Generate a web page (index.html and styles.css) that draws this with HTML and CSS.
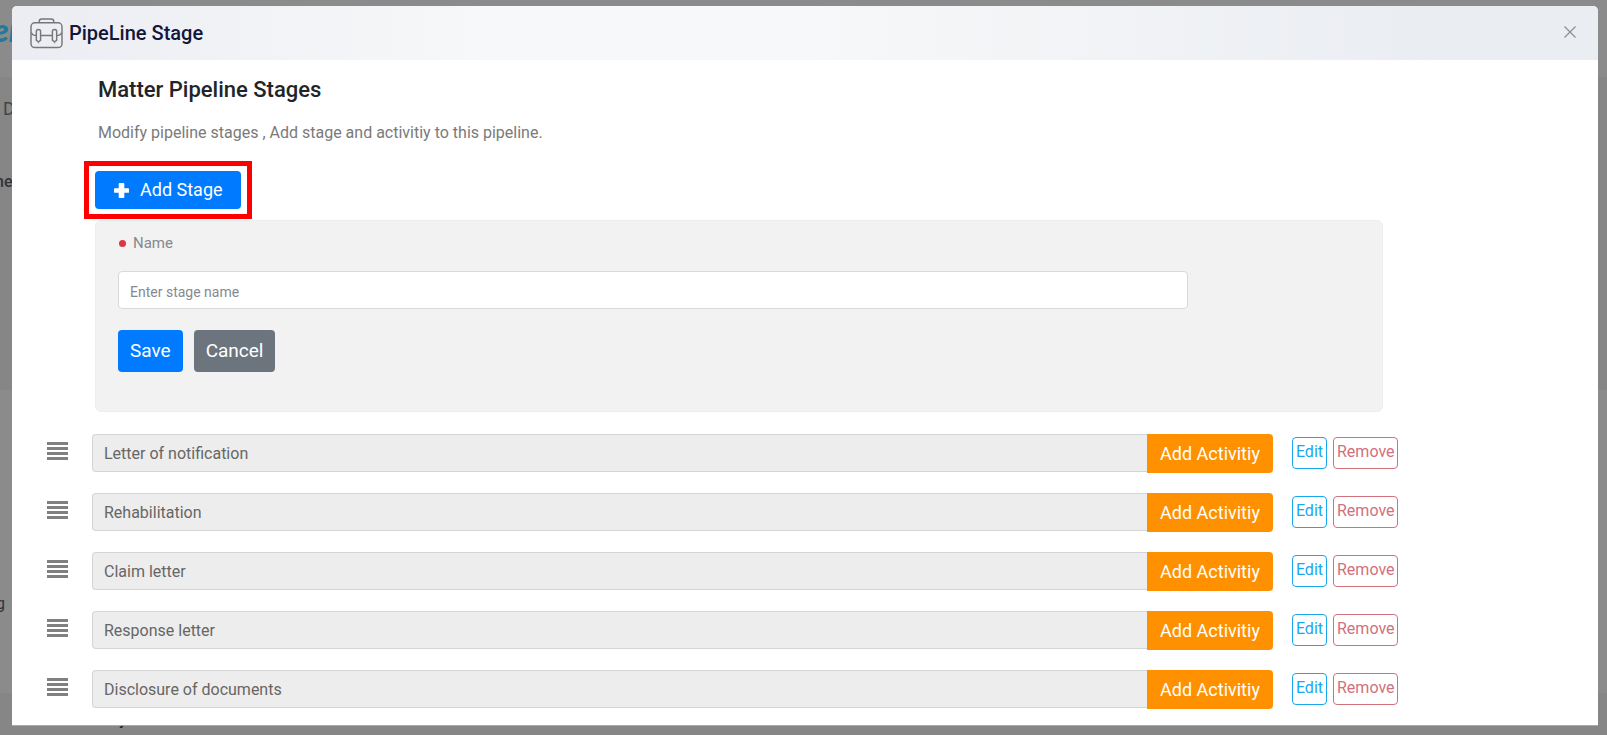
FILE: index.html
```html
<!DOCTYPE html>
<html lang="en">
<head>
<meta charset="utf-8">
<title>PipeLine Stage</title>
<link rel="stylesheet" href="styles.css">
</head>
<body>
<div class="page" aria-hidden="true">
  <div class="page-top"><span class="page-logo">er</span></div>
  <div class="page-band"><span>D</span><b>ne</b></div>
  <div class="page-section"><span>g</span></div>
  <div class="page-foot"><b>y</b></div>
</div>
<div class="backdrop">
<main class="modal" role="dialog" aria-labelledby="modal-title">
  <header class="modal-header">
    <svg class="case-icon" viewBox="0 0 34 32" fill="none" stroke="#777" stroke-width="1.5">
      <rect x="1" y="5" width="32" height="25.500" rx="4"/>
      <path d="M9.500 5V3.500Q9.500 1 12 1H22Q24.500 1 24.500 3.500V5M1.500 15C2 17.300 3.500 18 6.500 18M11 18H23M27.500 18C30.500 18 32 17.300 32.500 15"/>
      <path d="M6.500 23V14a2.200 2.200 0 0 1 4.400 0V23L8.700 24.500ZM23.100 23V14a2.200 2.200 0 0 1 4.400 0V23L25.300 24.500ZM8.700 24V26M25.300 24V26"/>
    </svg>
    <h1 class="modal-title" id="modal-title">PipeLine Stage</h1>
    <button class="close" type="button" aria-label="Close">
      <svg viewBox="0 0 12 12" stroke="#8b8d90" stroke-width="1.2"><path d="M.5 .5L11.500 11.500M11.500 .5L.5 11.500"/></svg>
    </button>
  </header>
  <section class="modal-body">
    <h2 class="heading">Matter Pipeline Stages</h2>
    <p class="lead">Modify pipeline stages , Add stage and activitiy to this pipeline.</p>
    <div class="highlight">
      <button class="btn btn-add" type="button">
        <svg class="plus" viewBox="0 0 16 16" fill="#fff"><path d="M6 0H10Q11 0 11 1V5.500H15Q16 5.500 16 6.500V9.500Q16 10.500 15 10.500H11V15Q11 16 10 16H6Q5 16 5 15V10.500H1Q0 10.500 0 9.500V6.500Q0 5.500 1 5.500H5V1Q5 0 6 0Z"/></svg>
        Add Stage
      </button>
    </div>
    <form class="panel">
      <label class="field-label" for="stage-name">Name</label>
      <input class="stage-name" id="stage-name" type="text" placeholder="Enter stage name">
      <div class="form-actions">
        <button class="btn btn-save" type="button">Save</button>
        <button class="btn btn-cancel" type="button">Cancel</button>
      </div>
    </form>
    <ul class="stages">
      <li class="stage">
        <span class="grip"><i></i><i></i><i></i><i></i></span>
        <input class="stage-input" type="text" value="Letter of notification" aria-label="Stage 1" readonly>
        <button class="btn btn-activity" type="button">Add Activitiy</button>
        <button class="btn-outline edit" type="button">Edit</button>
        <button class="btn-outline remove" type="button">Remove</button>
      </li>
      <li class="stage">
        <span class="grip"><i></i><i></i><i></i><i></i></span>
        <input class="stage-input" type="text" value="Rehabilitation" aria-label="Stage 2" readonly>
        <button class="btn btn-activity" type="button">Add Activitiy</button>
        <button class="btn-outline edit" type="button">Edit</button>
        <button class="btn-outline remove" type="button">Remove</button>
      </li>
      <li class="stage">
        <span class="grip"><i></i><i></i><i></i><i></i></span>
        <input class="stage-input" type="text" value="Claim letter" aria-label="Stage 3" readonly>
        <button class="btn btn-activity" type="button">Add Activitiy</button>
        <button class="btn-outline edit" type="button">Edit</button>
        <button class="btn-outline remove" type="button">Remove</button>
      </li>
      <li class="stage">
        <span class="grip"><i></i><i></i><i></i><i></i></span>
        <input class="stage-input" type="text" value="Response letter" aria-label="Stage 4" readonly>
        <button class="btn btn-activity" type="button">Add Activitiy</button>
        <button class="btn-outline edit" type="button">Edit</button>
        <button class="btn-outline remove" type="button">Remove</button>
      </li>
      <li class="stage">
        <span class="grip"><i></i><i></i><i></i><i></i></span>
        <input class="stage-input" type="text" value="Disclosure of documents" aria-label="Stage 5" readonly>
        <button class="btn btn-activity" type="button">Add Activitiy</button>
        <button class="btn-outline edit" type="button">Edit</button>
        <button class="btn-outline remove" type="button">Remove</button>
      </li>
    </ul>
  </section>
</main>
</div>
</body>
</html>
```
FILE: styles.css
```css
* { box-sizing: border-box; }
body {
  margin: 0;
  height: 100vh;
  overflow: hidden;
  font-family: Roboto, "Liberation Sans", sans-serif;
  background: #8b8b8b;
}
button, input { font-family: inherit; margin: 0; }

/* Dimmed page under the dialog */
.page {
  display: flex;
  flex-direction: column;
  height: 100vh;
  overflow: hidden;
  color: #30343a;
  font-size: 18px;
  line-height: 24px;
}
.page-top { height: 77px; padding-top: 14px; }
.page-logo {
  display: block;
  margin-left: -7px;
  color: #1f7a9b;
  font: italic 900 32px/32px Lato, sans-serif;
}
.page-band {
  display: flex;
  flex-direction: column;
  gap: 49px;
  height: 313px;
  padding-top: 20px;
  background: #868686;
}
.page-band span { margin-left: 3px; color: #444; }
.page-band b { margin-left: -5px; font-size: 16px; font-weight: 500; }
.page-section { height: 303px; padding-top: 202px; }
.page-section span { display: block; margin-left: -4px; font-size: 16px; }
.page-foot { flex: 1; padding: 15px 0 0 119px; background: #868686; font-size: 16px; }
.page-foot b { font-weight: 500; color: #222; }

.backdrop { position: fixed; inset: 0; padding: 6px 9px 9px 12px; display: flex; }
.modal {
  flex: 1;
  min-width: 0;
  background: #fff;
  border-radius: 5px 5px 0 0;
  border-bottom: 1px solid #aaa;
  overflow: hidden;
}
.modal-header {
  display: flex;
  align-items: center;
  height: 54px;
  padding: 0 22px 0 18px;
  background: linear-gradient(90deg, #ebedf3 0%, #f7f8f9 30%, #f7f8f9 50%, #eaedf2 90%);
}
.case-icon { width: 33px; height: 31px; }
.modal-title {
  flex: 1;
  margin: 0 0 0 6px;
  font-size: 20px;
  line-height: 28px;
  font-weight: 500;
  color: #12163a;
}
.close { width: 12px; height: 12px; margin-bottom: 2px; padding: 0; border: 0; background: none; }
.close svg { display: block; width: 12px; height: 12px; }

.modal-body { padding: 17px 200px 0 34px; }
.heading {
  margin: 0 0 0 52px;
  font-size: 22px;
  line-height: 26px;
  font-weight: 500;
  color: #212529;
}
.lead { margin: 18px 0 0 52px; font-size: 16px; line-height: 24px; color: #7a7a7a; }

.btn { border: 0; border-radius: 4px; color: #fff; font-size: 18px; line-height: 24px; white-space: nowrap; }
.highlight { width: max-content; margin: 16px 0 1px 38px; padding: 5px 6px; border: 5px solid #f00; }
.btn-add {
  display: flex;
  align-items: center;
  gap: 11px;
  height: 38px;
  padding: 0 18px 0 19px;
  background: #007bff;
}
.plus { width: 15px; height: 15px; }

.panel {
  margin: 0 15px 0 49px;
  padding: 10px 194px 39px 22px;
  border: 1px solid #eee;
  border-radius: 6px;
  background: #f2f2f2;
}
.field-label { display: flex; align-items: center; gap: 7px; font-size: 15px; line-height: 24px; color: #85898e; }
.field-label::before { content: ""; width: 7px; height: 7px; margin-left: 1px; border-radius: 50%; background: #dc3545; }
.stage-name {
  display: block;
  width: 100%;
  height: 38px;
  margin-top: 16px;
  padding: 4px 11px 0;
  border: 1px solid #d5dade;
  border-radius: 4px;
  font-size: 14px;
}
.stage-name::placeholder { color: #858a90; opacity: 1; }
.form-actions { display: flex; gap: 11px; margin-top: 21px; }
.btn-save, .btn-cancel { height: 42px; padding: 0 12px; font-size: 19px; }
.btn-save { background: #007bff; }
.btn-cancel { background: #6c757d; }

.stages { display: grid; gap: 20px; margin: 22px 0 0; padding: 0; list-style: none; }
.stage { display: flex; align-items: flex-start; height: 39px; }
.grip { display: grid; gap: 2px; width: 21px; margin: 8px 24px 0 1px; }
.grip i { height: 3px; background: #808080; }
.stage-input {
  flex: 1;
  min-width: 0;
  height: 38px;
  padding: 0 11px;
  border: 1px solid #d5d5d5;
  border-right: 0;
  border-radius: 4px 0 0 4px;
  background: #ededed;
  color: #666;
  font-size: 16px;
}
.btn-activity { height: 39px; padding: 0 13px; border-radius: 0 4px 4px 0; background: #ff9100; }
.btn-outline {
  height: 32px;
  margin-top: 3px;
  padding: 0 3px 3px;
  border: 1px solid;
  border-radius: 4px;
  background: #fff;
  font-size: 16px;
}
.edit { margin-left: 19px; color: #19a7ee; }
.remove { width: 65px; margin-left: 6px; color: #d0717c; }
```
